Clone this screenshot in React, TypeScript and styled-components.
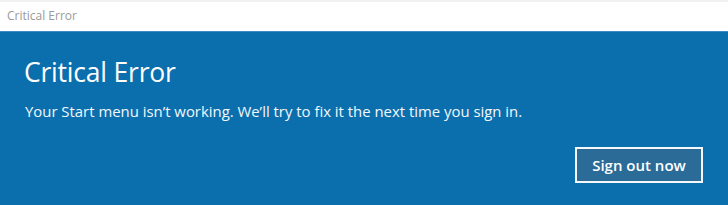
import React from "react";
import styled, { createGlobalStyle } from "styled-components";

const GlobalStyle = createGlobalStyle`
  html, body {
    margin: 0;
    padding: 0;
    background: #ffffff;
  }
  body {
    font-family: "Open Sans", "Noto Sans", sans-serif;
  }
`;

const Window = styled.div`
  width: 728px;
  height: 205px;
  display: flex;
  flex-direction: column;
  overflow: hidden;
`;

const TitleBar = styled.div`
  height: 31px;
  background: #ffffff;
  border-top: 2px solid #f1f1f1;
  box-sizing: border-box;
  display: flex;
  align-items: center;
  padding: 0 0 2px 7px;
  color: #9a9a9a;
  font-size: 12px;
`;

const Panel = styled.div`
  flex: 1;
  background: #0b6fae;
  border-top: 1px solid #3d8cc2;
  display: flex;
  flex-direction: column;
  padding: 22px 25px 0 24px;
  color: #ffffff;
`;

const Heading = styled.h1`
  margin: 0;
  font-weight: 400;
  font-size: 26.5px;
  line-height: 36px;
  letter-spacing: -0.2px;
`;

const Message = styled.p`
  margin: 11px 0 0 1px;
  font-size: 14.9px;
  line-height: 20px;
  color: #f2f7fb;
`;

const Actions = styled.div`
  display: flex;
  justify-content: flex-end;
  margin-top: 26px;
`;

const Button = styled.button`
  width: 128px;
  height: 36px;
  background: #2a6b98;
  border: 2px solid #f4f8fb;
  color: #ffffff;
  font-family: "Open Sans", "Noto Sans", sans-serif;
  font-size: 15px;
  font-weight: 600;
  padding: 0;
  cursor: pointer;
`;

export default function App() {
  return (
    <>
      <GlobalStyle />
      <Window>
        <TitleBar>Critical Error</TitleBar>
        <Panel>
          <Heading>Critical Error</Heading>
          <Message>
            Your Start menu isn’t working. We’ll try to fix it the next time you sign in.
          </Message>
          <Actions>
            <Button>Sign out now</Button>
          </Actions>
        </Panel>
      </Window>
    </>
  );
}
